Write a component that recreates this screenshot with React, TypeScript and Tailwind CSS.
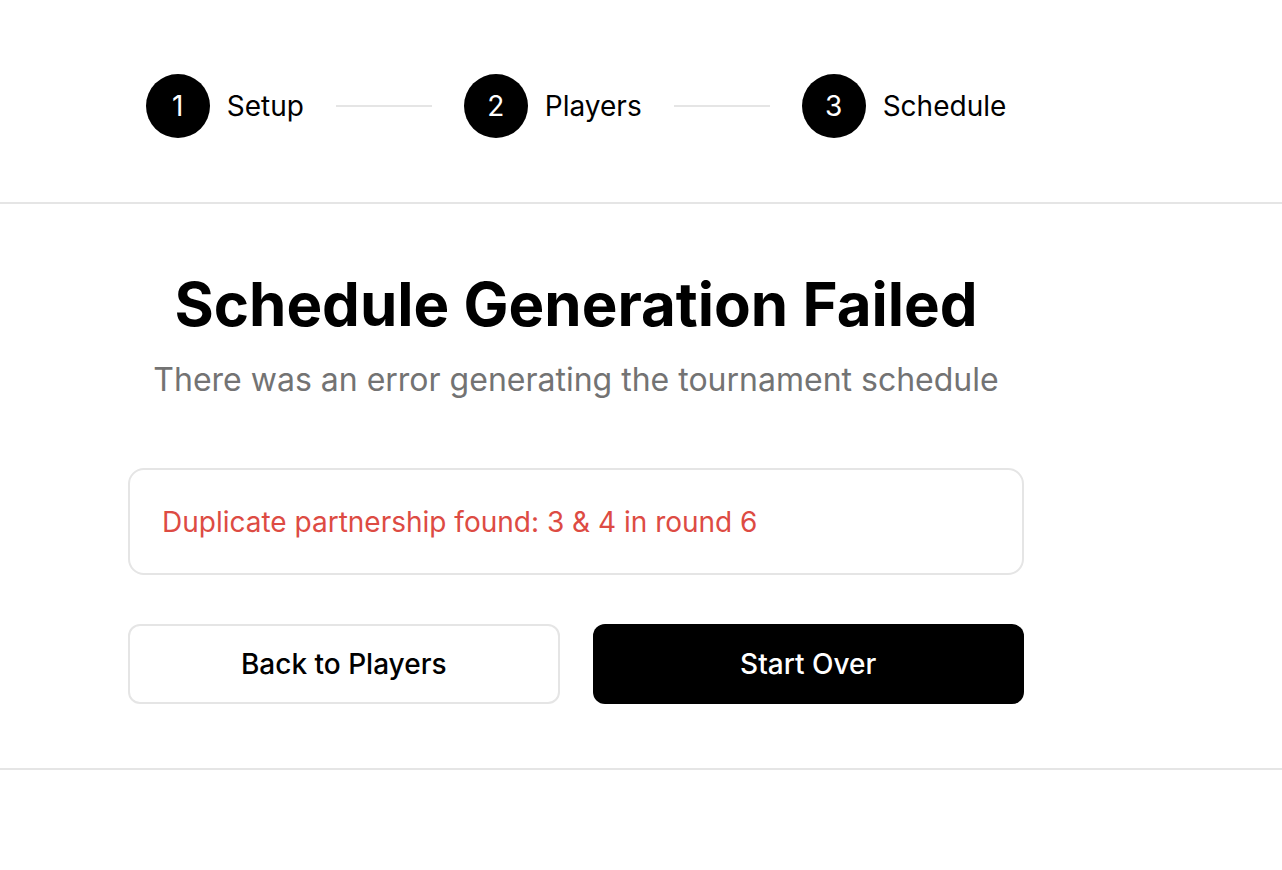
import React from 'react';

const steps = [
  { n: 1, label: 'Setup' },
  { n: 2, label: 'Players' },
  { n: 3, label: 'Schedule' },
];

function Stepper() {
  return (
    <div className="flex items-center justify-center">
      {steps.map((s, i) => (
        <React.Fragment key={s.n}>
          <div className="flex items-center gap-[17px]">
            <div className="flex h-16 w-16 items-center justify-center rounded-full bg-black text-[28px] text-white">
              {s.n}
            </div>
            <span className="text-[28px] text-black">{s.label}</span>
          </div>
          {i !== steps.length - 1 && <div className="mx-8 h-[2px] w-24 bg-[#e5e5e5]" />}
        </React.Fragment>
      ))}
    </div>
  );
}

export default function App() {
  return (
    <div className="min-h-screen bg-white font-['Inter',sans-serif] text-black">
      <header className="border-b-2 border-[#e5e5e5] pb-16 pl-32 pt-[74px]">
        <div className="w-[896px]">
          <Stepper />
        </div>
      </header>
      <main className="border-b-2 border-[#e5e5e5] pb-16 pl-32 pt-16">
        <div className="w-[896px]">
          <h1 className="text-center text-[60px] font-bold leading-[72px]">
            Schedule Generation Failed
          </h1>
          <p className="mt-4 text-center text-[32px] leading-[48px] text-[#737373]">
            There was an error generating the tournament schedule
          </p>
          <div className="mt-16 rounded-2xl border-2 border-[#e5e5e5] px-8 pb-[30px] pt-[32px]">
            <p className="text-[28px] leading-[41px] text-[#dd4b43]">
              Duplicate partnership found: 3 &amp; 4 in round 6
            </p>
          </div>
          <div className="mt-[49px] grid grid-cols-2 gap-[33px]">
            <button className="h-20 rounded-xl border-2 border-[#e5e5e5] bg-white text-[28px] font-medium text-black">
              Back to Players
            </button>
            <button className="h-20 rounded-xl bg-black text-[28px] font-medium text-white">
              Start Over
            </button>
          </div>
        </div>
      </main>
    </div>
  );
}
